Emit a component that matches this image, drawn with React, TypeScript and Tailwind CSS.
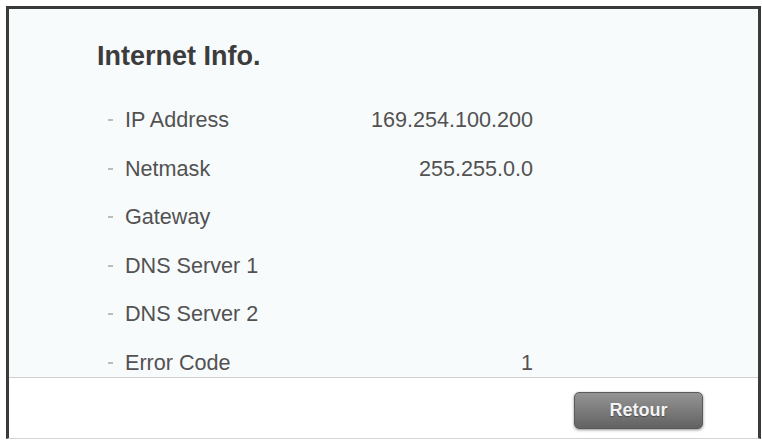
import React from 'react';

type Row = { label: string; value: string };

const rows: Row[] = [
    { label: 'IP Address', value: '169.254.100.200' },
    { label: 'Netmask', value: '255.255.0.0' },
    { label: 'Gateway', value: '' },
    { label: 'DNS Server 1', value: '' },
    { label: 'DNS Server 2', value: '' },
    { label: 'Error Code', value: '1' },
];

const InfoRow: React.FC<{ row: Row }> = ({ row }) => (
    <div className="flex h-[26px] w-[425px] items-center justify-between">
        <div className="flex items-center">
            <span className="h-[2px] w-[5px] bg-[#bcbcbc]" />
            <span className="ml-[12px] text-[21.6px] leading-[26px] text-[#525252]">{row.label}</span>
        </div>
        <span className="text-[21.6px] leading-[26px] text-[#525252]">{row.value}</span>
    </div>
);

export default function App() {
    return (
        <div className="h-[440px] w-[762px] bg-white pl-[6px] pt-[6px] font-['Liberation_Sans',Arial,sans-serif]">
            <div className="flex h-[433px] w-[755px] flex-col border-x-[3px] border-t-[3px] border-b border-x-[#3a3a3a] border-t-[#3a3a3a] border-b-[#d4d4d4] bg-white">
                {/* Info panel */}
                <div className="flex h-[368px] flex-col overflow-hidden bg-[#f8fbfc] pl-[88px] pt-[32px]">
                    <h1 className="text-[27px] font-bold leading-[30px] text-[#3c3c3c]">Internet Info.</h1>
                    <div className="ml-[11px] mt-[36px] flex flex-col gap-[22.6px]">
                        {rows.map((row) => (
                            <InfoRow key={row.label} row={row} />
                        ))}
                    </div>
                </div>

                {/* Footer */}
                <div className="flex flex-1 justify-end border-t border-[#d0d0d0] pr-[55px] pt-[14px]">
                    <button className="h-[37px] w-[129px] rounded-[5px] border border-[#5a5a5a] bg-gradient-to-b from-[#959595] to-[#626262] text-[18px] font-bold text-[#f4f4f4] shadow-[0_1px_3px_rgba(0,0,0,0.45)] [text-shadow:0_1px_1px_rgba(0,0,0,0.35)]">
                        Retour
                    </button>
                </div>
            </div>
        </div>
    );
}
